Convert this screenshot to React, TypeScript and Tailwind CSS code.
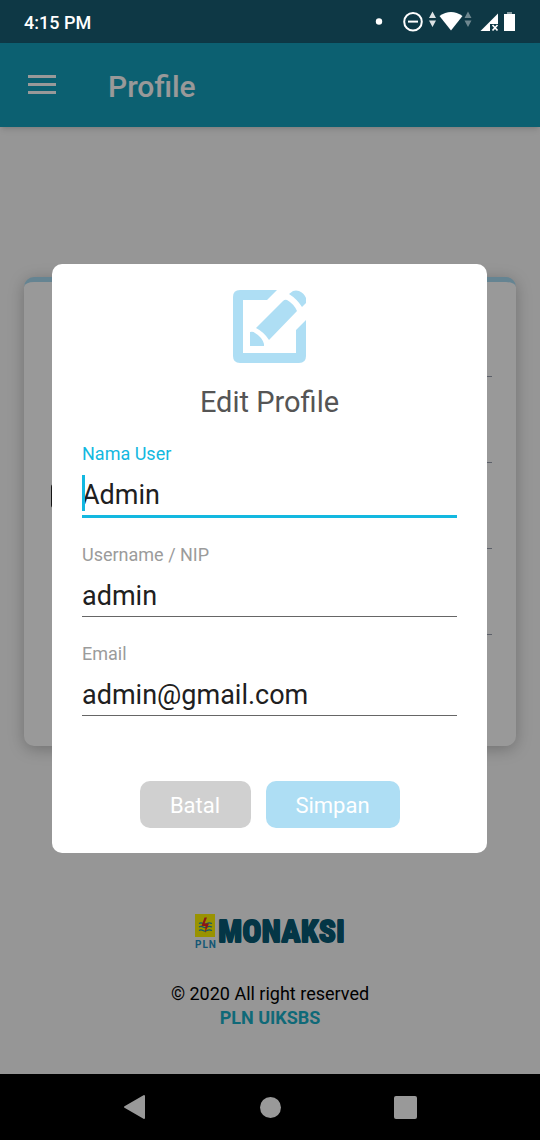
import React from "react";

function StatusBar() {
  return (
    <header className="flex h-[43px] shrink-0 items-center justify-between bg-[#0e3845] pr-6 pl-6 text-white">
      <span className="pt-[2px] text-[18px] font-medium">4:15 PM</span>
      <svg width="142" height="24" viewBox="374 10 142 24" fill="#fff" aria-hidden="true">
        <circle cx="379" cy="21.5" r="3.2" />
        <circle cx="413" cy="21.7" r="8.8" fill="none" stroke="#fff" strokeWidth="2" />
        <path d="M408 20.6h10v2h-10z" />
        <path d="M432.500 11.500l3.500 6.500h-7zM432.500 27l3.500-6.500h-7z" opacity=".85" />
        <path d="M439.500 16Q451 8 462.500 16L451 30.500z" />
        <path d="M468 11.500l3.500 6.500h-7zM468 27l3.500-6.500h-7z" opacity=".4" />
        <path d="M498 13.500V24h-8v7h-9.500z" />
        <path d="M492.500 25l5 5.500m0-5.500l-5 5.500" stroke="#fff" strokeWidth="1.700" />
        <path d="M504 14h11v17h-11z" />
        <path d="M507 12h5v2h-5z" opacity=".5" />
      </svg>
    </header>
  );
}

function AppBar() {
  return (
    <div className="flex h-[84px] shrink-0 items-center bg-[#14a0bc] px-7 shadow-md">
      <button type="button" aria-label="Menu" className="mr-[52px]">
        <svg width="28" height="20" viewBox="0 0 28 20" fill="#fff" className="block">
          <path d="M0 0h28v3H0zM0 8h28v3H0zM0 16h28v3H0z" />
        </svg>
      </button>
      <h1 className="pt-[2px] text-[30px] font-medium text-white">Profile</h1>
    </div>
  );
}

function ProfileCard() {
  return (
    <section className="mx-6 mt-[150px] h-[469px] rounded-[10px] border-t-[5px] border-[#a9dcf3] bg-white pt-2 pr-6 pl-[27px] shadow-[0_3px_16px_rgba(0,0,0,0.25)]">
      <div className="ml-7 h-[87px] border-b border-gray-400" />
      <div className="ml-7 h-[86px] border-b border-gray-400" />
      <div className="flex h-[86px] pt-5">
        <svg width="28" height="26" viewBox="0 0 28 26" aria-hidden="true">
          <rect x="1" y="2" width="24" height="22" rx="2" fill="none" stroke="#222" strokeWidth="2" />
        </svg>
        <div className="-mt-5 grow border-b border-gray-400" />
      </div>
      <div className="ml-7 h-[86px] border-b border-gray-400" />
    </section>
  );
}

function Footer() {
  return (
    <footer className="mt-auto flex flex-col items-center pb-11 text-[18px] leading-6">
      <div className="mb-8 flex h-[37px] items-center gap-[2px]">
        <div className="flex flex-col items-center gap-[3px]">
          <svg width="20" height="23" viewBox="0 0 20 23" aria-hidden="true">
            <path fill="#fff500" d="M0 0h20v23H0z" />
            <path d="M4 9.500q2-1.200 4 0t4 0 5 0M4 13q2-1.200 4 0t4 0 5 0M4 16.500q2-1.200 4 0t4 0 5 0" fill="none" stroke="#168fbd" strokeWidth="1.200" />
            <path d="M9.500 3.500h2.500l-2.500 6H14L10 19l.5-7H6.500z" fill="#ed2424" />
          </svg>
          <span className="flex w-[21px] justify-between text-[10px] leading-[10px] font-bold text-[#2492c4]">
            <span>P</span>
            <span>L</span>
            <span>N</span>
          </span>
        </div>
        <span className="font-['Roboto_Condensed',Roboto,sans-serif] text-[32px] leading-[37px] font-black text-[#075b75] [-webkit-text-stroke:1px_#075b75] [text-shadow:0_1px_#075b75,0_-1px_#075b75]">
          MONAKSI
        </span>
      </div>
      <p className="text-black">© 2020 All right reserved</p>
      <p className="font-bold text-[#1ab0c8]">PLN UIKSBS</p>
    </footer>
  );
}

type FieldProps = { id: string; label: string; value: string; type?: string; variant?: "active" | "idle" };

function Field({ id, label, value, type = "text", variant = "idle" }: FieldProps) {
  const active = variant === "active";
  return (
    <div className="relative">
      <label htmlFor={id} className={`block text-[18px] leading-6 ${active ? "text-[#13b8e0]" : "text-[#9b9b9b]"}`}>
        {label}
      </label>
      <input
        id={id}
        type={type}
        defaultValue={value}
        className={`box-content block h-[41px] w-full pt-2 text-[27px] text-[#202020] outline-none ${active ? "border-b-3 border-[#13b8e0]" : "border-b border-[#666]"}`}
      />
      {active && <span className="absolute top-[33px] left-0 h-9 w-[3px] bg-[#13b8e0]" />}
    </div>
  );
}

function EditIcon() {
  return (
    <svg width="74" height="74" viewBox="0 0 74 74" fill="#aedef4" aria-hidden="true">
      <path d="M7 0H44L34 10H10V63H63V40L73 30V66Q73 73 66 73H7Q0 73 0 66V7Q0 0 7 0z" />
      <path d="M23 38L50 11Q52 9 54 10Q61 14 64 21L36 50Q31 42 23 38z" />
      <path d="M56 4L60 1Q63 0 66 1Q71 3 73 8V13L69 17Q64 9 56 4z" />
      <path d="M17 42Q20 41 22 43Q29 47 31 54V56H17z" />
    </svg>
  );
}

function EditProfileDialog() {
  return (
    <div className="absolute inset-0 flex items-center justify-center bg-black/40 pr-[53px] pl-[52px]">
      <form
        role="dialog"
        aria-labelledby="dialog-title"
        onSubmit={(event) => event.preventDefault()}
        className="flex w-full max-w-lg flex-col items-center rounded-[10px] bg-white px-[30px] pt-[26px] pb-[25px]"
      >
        <EditIcon />
        <h2 id="dialog-title" className="mt-5 mb-[22px] text-[29px] leading-9 text-[#555]">
          Edit Profile
        </h2>
        <div className="flex w-full flex-col gap-[25px]">
          <Field id="name" label="Nama User" value="Admin" variant="active" />
          <Field id="username" label="Username / NIP" value="admin" />
          <Field id="email" label="Email" value="admin@gmail.com" type="email" />
        </div>
        <div className="mt-[65px] flex gap-[15px] text-[22px] text-white">
          <button type="button" className="h-[47px] w-[111px] rounded-[10px] bg-[#d0d0d0] pt-[2px]">Batal</button>
          <button type="submit" className="h-[47px] w-[134px] rounded-[10px] bg-[#aedef4] pt-[2px]">Simpan</button>
        </div>
      </form>
    </div>
  );
}

function NavigationBar() {
  return (
    <nav className="flex h-[66px] shrink-0 items-center justify-center bg-black">
      <button type="button" aria-label="Back" className="flex w-1/4 justify-center">
        <svg width="24" height="26" viewBox="0 0 24 26" fill="#999" stroke="#999" strokeWidth="2" strokeLinejoin="round">
          <path d="M2 13L21 2V24z" />
        </svg>
      </button>
      <button type="button" aria-label="Home" className="flex w-1/4 justify-center">
        <span className="size-[21px] rounded-full bg-[#999]" />
      </button>
      <button type="button" aria-label="Recent apps" className="flex w-1/4 justify-center">
        <span className="size-[23px] rounded-[2px] bg-[#999]" />
      </button>
    </nav>
  );
}

export default function App() {
  return (
    <div className="flex min-h-screen flex-col font-[Roboto,sans-serif]">
      <StatusBar />
      <main className="relative flex grow flex-col bg-[#fafafa]">
        <AppBar />
        <ProfileCard />
        <Footer />
        <EditProfileDialog />
      </main>
      <NavigationBar />
    </div>
  );
}
